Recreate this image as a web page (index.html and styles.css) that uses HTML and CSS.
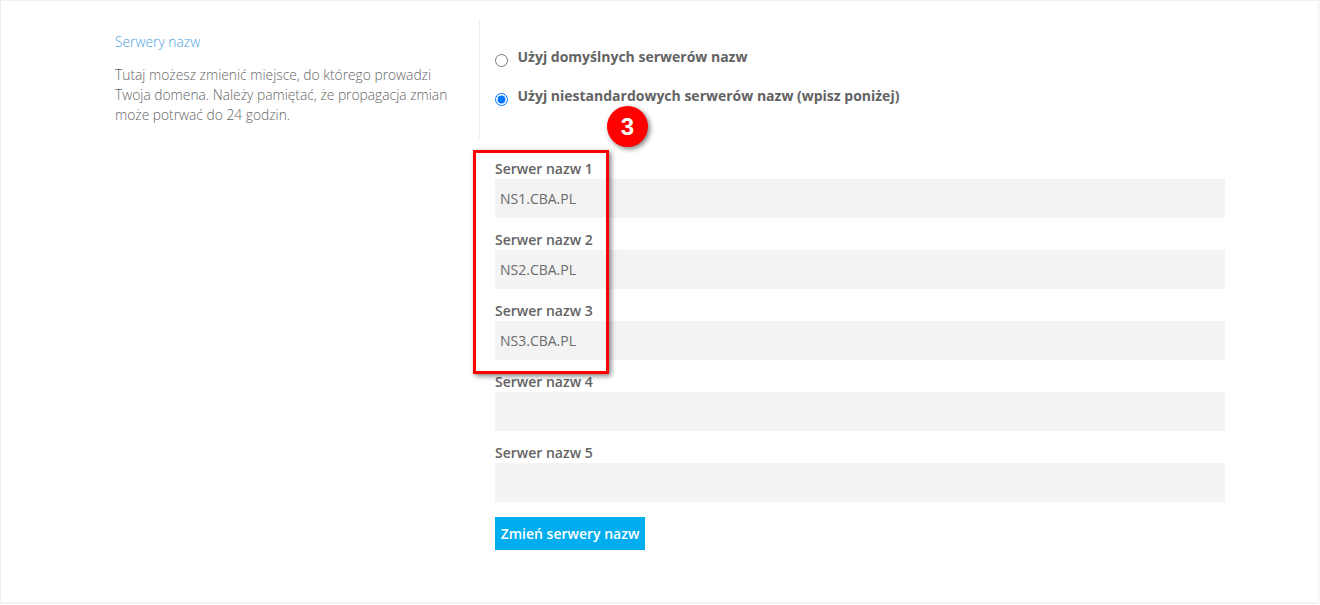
FILE: index.html
```html
<!DOCTYPE html>
<html lang="pl">
<head>
<meta charset="utf-8">
<title>Serwery nazw</title>
<link rel="stylesheet" href="styles.css">
</head>
<body>
<div class="frame">
  <div class="layout">
    <aside class="side">
      <h2 class="side-title">Serwery nazw</h2>
      <p class="side-text">Tutaj możesz zmienić miejsce, do którego prowadzi Twoja domena. Należy pamiętać, że propagacja zmian może potrwać do 24 godzin.</p>
    </aside>
    <form class="main">
      <label class="radio"><input type="radio" name="ns"><span>Użyj domyślnych serwerów nazw</span></label>
      <label class="radio"><input type="radio" name="ns" checked><span>Użyj niestandardowych serwerów nazw (wpisz poniżej)</span></label>
      <div class="fields">
        <label class="field"><span class="field-label">Serwer nazw 1</span><input class="field-input" type="text" value="NS1.CBA.PL"></label>
        <label class="field"><span class="field-label">Serwer nazw 2</span><input class="field-input" type="text" value="NS2.CBA.PL"></label>
        <label class="field"><span class="field-label">Serwer nazw 3</span><input class="field-input" type="text" value="NS3.CBA.PL"></label>
        <label class="field"><span class="field-label">Serwer nazw 4</span><input class="field-input" type="text"></label>
        <label class="field"><span class="field-label">Serwer nazw 5</span><input class="field-input" type="text"></label>
      </div>
      <button class="submit" type="button">Zmień serwery nazw</button>
    </form>
  </div>
  <div class="mark-box"></div>
  <div class="mark-badge">3</div>
</div>
</body>
</html>
```
FILE: styles.css
```css
* { box-sizing: border-box; }
html, body { margin: 0; padding: 0; background: #fff; }
body { font-family: "Open Sans", "Liberation Sans", sans-serif; color: #666; overflow: hidden; }
.frame {
  position: relative;
  width: 1320px;
  height: 604px;
  border-style: solid;
  border-width: 1px 3px 2px 1px;
  border-color: #f1f0f0 #f8f8f8 #f3f3f3 #f1f0f0;
  padding-top: 19px;
}
.layout { display: flex; align-items: flex-start; }
.side {
  width: 479px;
  height: 119px;
  padding: 13px 25px 0 114px;
  border-right: 1px solid #eeeeee;
  flex: none;
}
.side-title {
  margin: 0 0 14px;
  font-size: 13.8px;
  line-height: 18px;
  font-weight: 300;
  color: #4ba3e3;
}
.side-text {
  margin: 0;
  font-size: 13.8px;
  line-height: 20px;
  font-weight: 300;
  color: #666;
}
.main { width: 745px; padding-left: 15px; flex: none; }
.radio { display: flex; align-items: flex-start; height: 39px; font-size: 14px; font-weight: 700; color: #636363; line-height: 20px; }
.radio:first-child { margin-top: 27px; }
.radio input { margin: 7px 9.5px 0 0; width: 13px; height: 13px; flex: none; }
.fields { margin-top: 22px; }
.field { display: block; height: 71px; }
.field-label { display: block; height: 32px; padding-top: 12px; font-size: 14px; line-height: 20px; font-weight: 600; color: #636363; }
.field-input {
  display: block;
  width: 730px;
  height: 39px;
  border: 0;
  padding: 0 5px;
  background: #f3f3f3;
  font: 400 14px "Open Sans", "Liberation Sans", sans-serif;
  color: #6b6b6b;
}
.submit {
  display: block;
  width: 150px;
  height: 33px;
  margin-top: 15px;
  padding: 0;
  border: 0;
  background: #00adee;
  color: #fff;
  font: 600 14px "Open Sans", "Liberation Sans", sans-serif;
}
.mark-box {
  position: absolute;
  left: 472px;
  top: 149px;
  width: 136px;
  height: 224px;
  border: 3px solid #f00;
  box-shadow: 2px 2px 5px rgba(0, 0, 0, .5);
}
.mark-badge {
  position: absolute;
  left: 606px;
  top: 105px;
  width: 41px;
  height: 41px;
  border-radius: 50%;
  background: #f00;
  color: #fff;
  box-shadow: 2px 2px 5px rgba(0, 0, 0, .5);
  font: 700 24px/41px "Liberation Sans", sans-serif;
  text-align: center;
}
```
